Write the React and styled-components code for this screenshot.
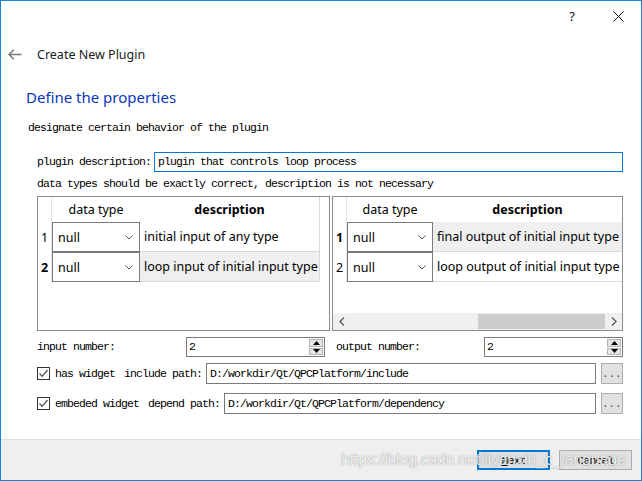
import React from 'react';
import styled, { createGlobalStyle } from 'styled-components';

const UI = `"Noto Sans", "Open Sans", sans-serif`;
const MONO = `"Liberation Mono", "DejaVu Sans Mono", monospace`;

const Global = createGlobalStyle`
  html, body { margin: 0; padding: 0; background: #fff; }
  body { width: 642px; height: 481px; overflow: hidden; }
  * { box-sizing: border-box; }
`;

const Window = styled.div`
  position: relative;
  width: 642px;
  height: 481px;
  border: 1px solid #1883d7;
  background: #fff;
  display: flex;
  flex-direction: column;
  font-family: ${UI};
  color: #000;
`;

const TitleBar = styled.div`
  height: 30px;
  display: flex;
  justify-content: flex-end;
  align-items: center;
`;

const TitleButton = styled.div`
  width: 46px;
  height: 30px;
  display: flex;
  align-items: center;
  justify-content: center;
  font-size: 13px;
  color: #111;
`;

const Header = styled.div`
  height: 46px;
  display: flex;
  align-items: center;
  padding-left: 7px;
  gap: 15px;
  font-size: 12.5px;
  color: #1a1a1a;
`;

const Heading = styled.div`
  margin: 9px 0 0 25px;
  line-height: 22px;
  font-size: 15px;
  color: #0a36b8;
`;

const Mono = styled.span`
  font-family: ${MONO};
  font-size: 11.5px;
  letter-spacing: -0.9px;
  white-space: pre;
  line-height: 14px;
  color: #000;
`;

const Subtitle = styled(Mono)`
  display: block;
  margin: 13px 0 0 27px;
`;

const Form = styled.div`
  padding: 0 18px 0 36px;
  display: flex;
  flex-direction: column;
`;

const DescRow = styled.div`
  margin-top: 17px;
  height: 20px;
  display: flex;
  align-items: center;
  gap: 3px;
`;

const TextInput = styled.div`
  flex: 1;
  height: ${p => p.$h || 20}px;
  border: 1px solid ${p => (p.$focus ? '#0078d7' : '#7a7a7a')};
  display: flex;
  align-items: center;
  padding-left: 3px;
  background: #fff;
`;

const Note = styled(Mono)`
  display: block;
  margin-top: 5px;
`;

const Tables = styled.div`
  margin-top: 5px;
  height: 135px;
  display: grid;
  grid-template-columns: 293px 291px;
  gap: 2px;
`;

const TableFrame = styled.div`
  border: 1px solid #8c8c8c;
  display: flex;
  flex-direction: column;
  overflow: hidden;
  background: #fff;
`;

const Grid = styled.div`
  flex: 1;
  display: grid;
  grid-template-columns: ${p => p.$cols};
  grid-template-rows: 25px 30px 30px;
  align-content: start;
  font-size: 12px;
`;

const Corner = styled.div`
  border-right: 1px solid #e4e4e4;
`;

const HeadCell = styled.div`
  display: flex;
  align-items: center;
  justify-content: center;
  font-weight: ${p => (p.$bold ? 700 : 400)};
  font-size: 12.5px;
  border-right: ${p => (p.$line ? '1px solid #d8d8d8' : 'none')};
  white-space: nowrap;
`;

const RowNum = styled.div`
  display: flex;
  align-items: center;
  justify-content: center;
  font-weight: ${p => (p.$current ? 700 : 400)};
  font-size: 12.5px;
  border-right: 1px solid #e4e4e4;
`;

const Combo = styled.div`
  border: 1px solid #7a7a7a;
  background: #fff;
  display: flex;
  align-items: center;
  justify-content: space-between;
  padding: 0 6px 0 5px;
  font-size: 12.5px;
`;

const DescCell = styled.div`
  display: flex;
  align-items: center;
  padding-left: 4px;
  font-size: 12.5px;
  white-space: nowrap;
  overflow: hidden;
  background: ${p => (p.$current ? '#efefef' : '#fff')};
  border-right: ${p => (p.$line ? '1px solid #d8d8d8' : 'none')};
  border-bottom: 1px solid #d8d8d8;
`;

const ScrollBar = styled.div`
  height: 17px;
  display: flex;
  background: #f0f0f0;
`;

const ScrollArrow = styled.div`
  width: 17px;
  display: flex;
  align-items: center;
  justify-content: center;
`;

const ScrollTrack = styled.div`
  flex: 1;
  display: flex;
  justify-content: flex-end;
  padding: 1px 0;
`;

const Thumb = styled.div`
  width: 127px;
  background: #cdcdcd;
`;

const SpinRow = styled.div`
  margin-top: 6px;
  height: 20px;
  display: flex;
  gap: 11px;
`;

const SpinGroup = styled.div`
  width: ${p => p.$w}px;
  display: flex;
  align-items: center;
  justify-content: space-between;
`;

const SpinBox = styled.div`
  width: 139px;
  height: 20px;
  border: 1px solid #7a7a7a;
  display: flex;
  align-items: center;
  justify-content: space-between;
  padding: 1px 1px 1px 2px;
`;

const SpinButtons = styled.div`
  width: 14px;
  height: 100%;
  display: flex;
  flex-direction: column;
  gap: 1px;
`;

const SpinBtn = styled.div`
  flex: 1;
  background: #e5e5e5;
  border: 1px solid #b5b5b5;
  display: flex;
  align-items: center;
  justify-content: center;
`;

const PathRow = styled.div`
  margin-top: ${p => p.$mt}px;
  height: 21px;
  display: flex;
  align-items: center;
`;

const CheckBox = styled.div`
  width: 13px;
  height: 13px;
  border: 1px solid #333;
  background: #fff;
  display: flex;
  align-items: center;
  justify-content: center;
  margin-right: 5px;
`;

const PathLabel = styled(Mono)`
  margin-right: ${p => p.$mr}px;
`;

const BrowseButton = styled.div`
  width: 22px;
  height: 21px;
  margin-left: 5px;
  background: #e1e1e1;
  border: 1px solid #adadad;
  display: flex;
  align-items: flex-end;
  justify-content: center;
  padding-bottom: 3px;
  font-family: ${MONO};
  font-size: 10px;
  letter-spacing: 0.5px;
  color: #333;
`;

const Spacer = styled.div`
  flex: 1;
`;

const Footer = styled.div`
  height: 41px;
  border-top: 1px solid #dfdfdf;
  background: #efefef;
  display: flex;
  align-items: center;
  justify-content: flex-end;
  gap: 9px;
  padding-right: 9px;
`;

const Button = styled.div`
  width: 73px;
  height: 20px;
  background: #e1e1e1;
  border: ${p => (p.$default ? '2px solid #0078d7' : '1px solid #adadad')};
  display: flex;
  align-items: center;
  justify-content: center;
  font-family: ${MONO};
  font-size: 11.5px;
  letter-spacing: -0.9px;
`;

const Watermark = styled.div`
  position: absolute;
  left: 340px;
  top: 450px;
  font-family: "Liberation Sans", Arial, sans-serif;
  font-size: 16px;
  letter-spacing: -0.2px;
  color: rgba(255, 255, 255, 0.85);
  text-shadow: 0 0 1px rgba(0, 0, 0, 0.35), 0 0 2px rgba(0, 0, 0, 0.15);
  pointer-events: none;
  white-space: nowrap;
`;

const Chevron = () => (
  <svg width="8" height="5" viewBox="0 0 8 5">
    <polyline points="0.5,0.5 4,4 7.5,0.5" fill="none" stroke="#555" strokeWidth="1" />
  </svg>
);

const ArrowH = ({ dir }) => (
  <svg width="6" height="9" viewBox="0 0 6 9">
    <polyline
      points={dir === 'left' ? '5,0.5 1,4.5 5,8.5' : '1,0.5 5,4.5 1,8.5'}
      fill="none"
      stroke="#606060"
      strokeWidth="1.4"
    />
  </svg>
);

const Tri = ({ up }) => (
  <svg width="7" height="4" viewBox="0 0 7 4">
    <polygon points={up ? '0,4 7,4 3.5,0' : '0,0 7,0 3.5,4'} fill="#000" />
  </svg>
);

const Check = () => (
  <svg width="11" height="11" viewBox="0 0 11 11">
    <polyline points="1.5,5.5 4.2,8.3 9.5,2" fill="none" stroke="#555" strokeWidth="1.3" />
  </svg>
);

const Spin = ({ label, w }) => (
  <SpinGroup $w={w}>
    <Mono>{label}</Mono>
    <SpinBox>
      <Mono>2</Mono>
      <SpinButtons>
        <SpinBtn><Tri up /></SpinBtn>
        <SpinBtn><Tri /></SpinBtn>
      </SpinButtons>
    </SpinBox>
  </SpinGroup>
);

const Table = ({ cols, rows, current, descLine, scroll }) => (
  <TableFrame>
    <Grid $cols={cols}>
      <Corner />
      <HeadCell>data type</HeadCell>
      <HeadCell $bold $line={descLine}>description</HeadCell>
      {descLine && <div />}
      {rows.map((r, i) => (
        <React.Fragment key={i}>
          <RowNum $current={current === i}>{i + 1}</RowNum>
          <Combo>null<Chevron /></Combo>
          <DescCell $current={current === i} $line={descLine}>{r}</DescCell>
          {descLine && <div />}
        </React.Fragment>
      ))}
    </Grid>
    {scroll && (
      <ScrollBar>
        <ScrollArrow><ArrowH dir="left" /></ScrollArrow>
        <ScrollTrack><Thumb /></ScrollTrack>
        <ScrollArrow><ArrowH dir="right" /></ScrollArrow>
      </ScrollBar>
    )}
  </TableFrame>
);

export default function App() {
  return (
    <>
      <Global />
      <Window>
        <TitleBar>
          <TitleButton>?</TitleButton>
          <TitleButton>
            <svg width="11" height="11" viewBox="0 0 11 11">
              <path d="M0.5 0.5 L10.5 10.5 M10.5 0.5 L0.5 10.5" stroke="#111" strokeWidth="1" />
            </svg>
          </TitleButton>
        </TitleBar>
        <Header>
          <svg width="14" height="11" viewBox="0 0 14 11">
            <path d="M1 5.5 H13.5 M5.8 0.8 L1 5.5 L5.8 10.2" fill="none" stroke="#777" strokeWidth="1.5" />
          </svg>
          <span>Create New Plugin</span>
        </Header>
        <Heading>Define the properties</Heading>
        <Subtitle>designate certain behavior of the plugin</Subtitle>
        <Form>
          <DescRow>
            <Mono>plugin description:</Mono>
            <TextInput $focus>
              <Mono>plugin that controls loop process</Mono>
            </TextInput>
          </DescRow>
          <Note>data types should be exactly correct, description is not necessary</Note>
          <Tables>
            <Table
              cols="14px 88px 180px 1fr"
              rows={['initial input of any type', 'loop input of initial input type']}
              current={1}
              descLine
            />
            <Table
              cols="14px 86px 1fr"
              rows={['final output of initial input type', 'loop output of initial input type']}
              current={0}
              scroll
            />
          </Tables>
          <SpinRow>
            <Spin label="input number:" w={288} />
            <Spin label="output number:" w={287} />
          </SpinRow>
          <PathRow $mt={6}>
            <CheckBox><Check /></CheckBox>
            <PathLabel $mr={9}>has widget</PathLabel>
            <PathLabel $mr={4}>include path:</PathLabel>
            <TextInput $h={21}>
              <Mono>D:/workdir/Qt/QPCPlatform/include</Mono>
            </TextInput>
            <BrowseButton>...</BrowseButton>
          </PathRow>
          <PathRow $mt={9}>
            <CheckBox><Check /></CheckBox>
            <PathLabel $mr={9}>embeded widget</PathLabel>
            <PathLabel $mr={4}>depend path:</PathLabel>
            <TextInput $h={21}>
              <Mono>D:/workdir/Qt/QPCPlatform/dependency</Mono>
            </TextInput>
            <BrowseButton>...</BrowseButton>
          </PathRow>
        </Form>
        <Spacer />
        <Footer>
          <Button $default><span><u>N</u>ext</span></Button>
          <Button>Cancel</Button>
        </Footer>
        <Watermark>https://blog.csdn.net/liyanxin_c_language</Watermark>
      </Window>
    </>
  );
}
